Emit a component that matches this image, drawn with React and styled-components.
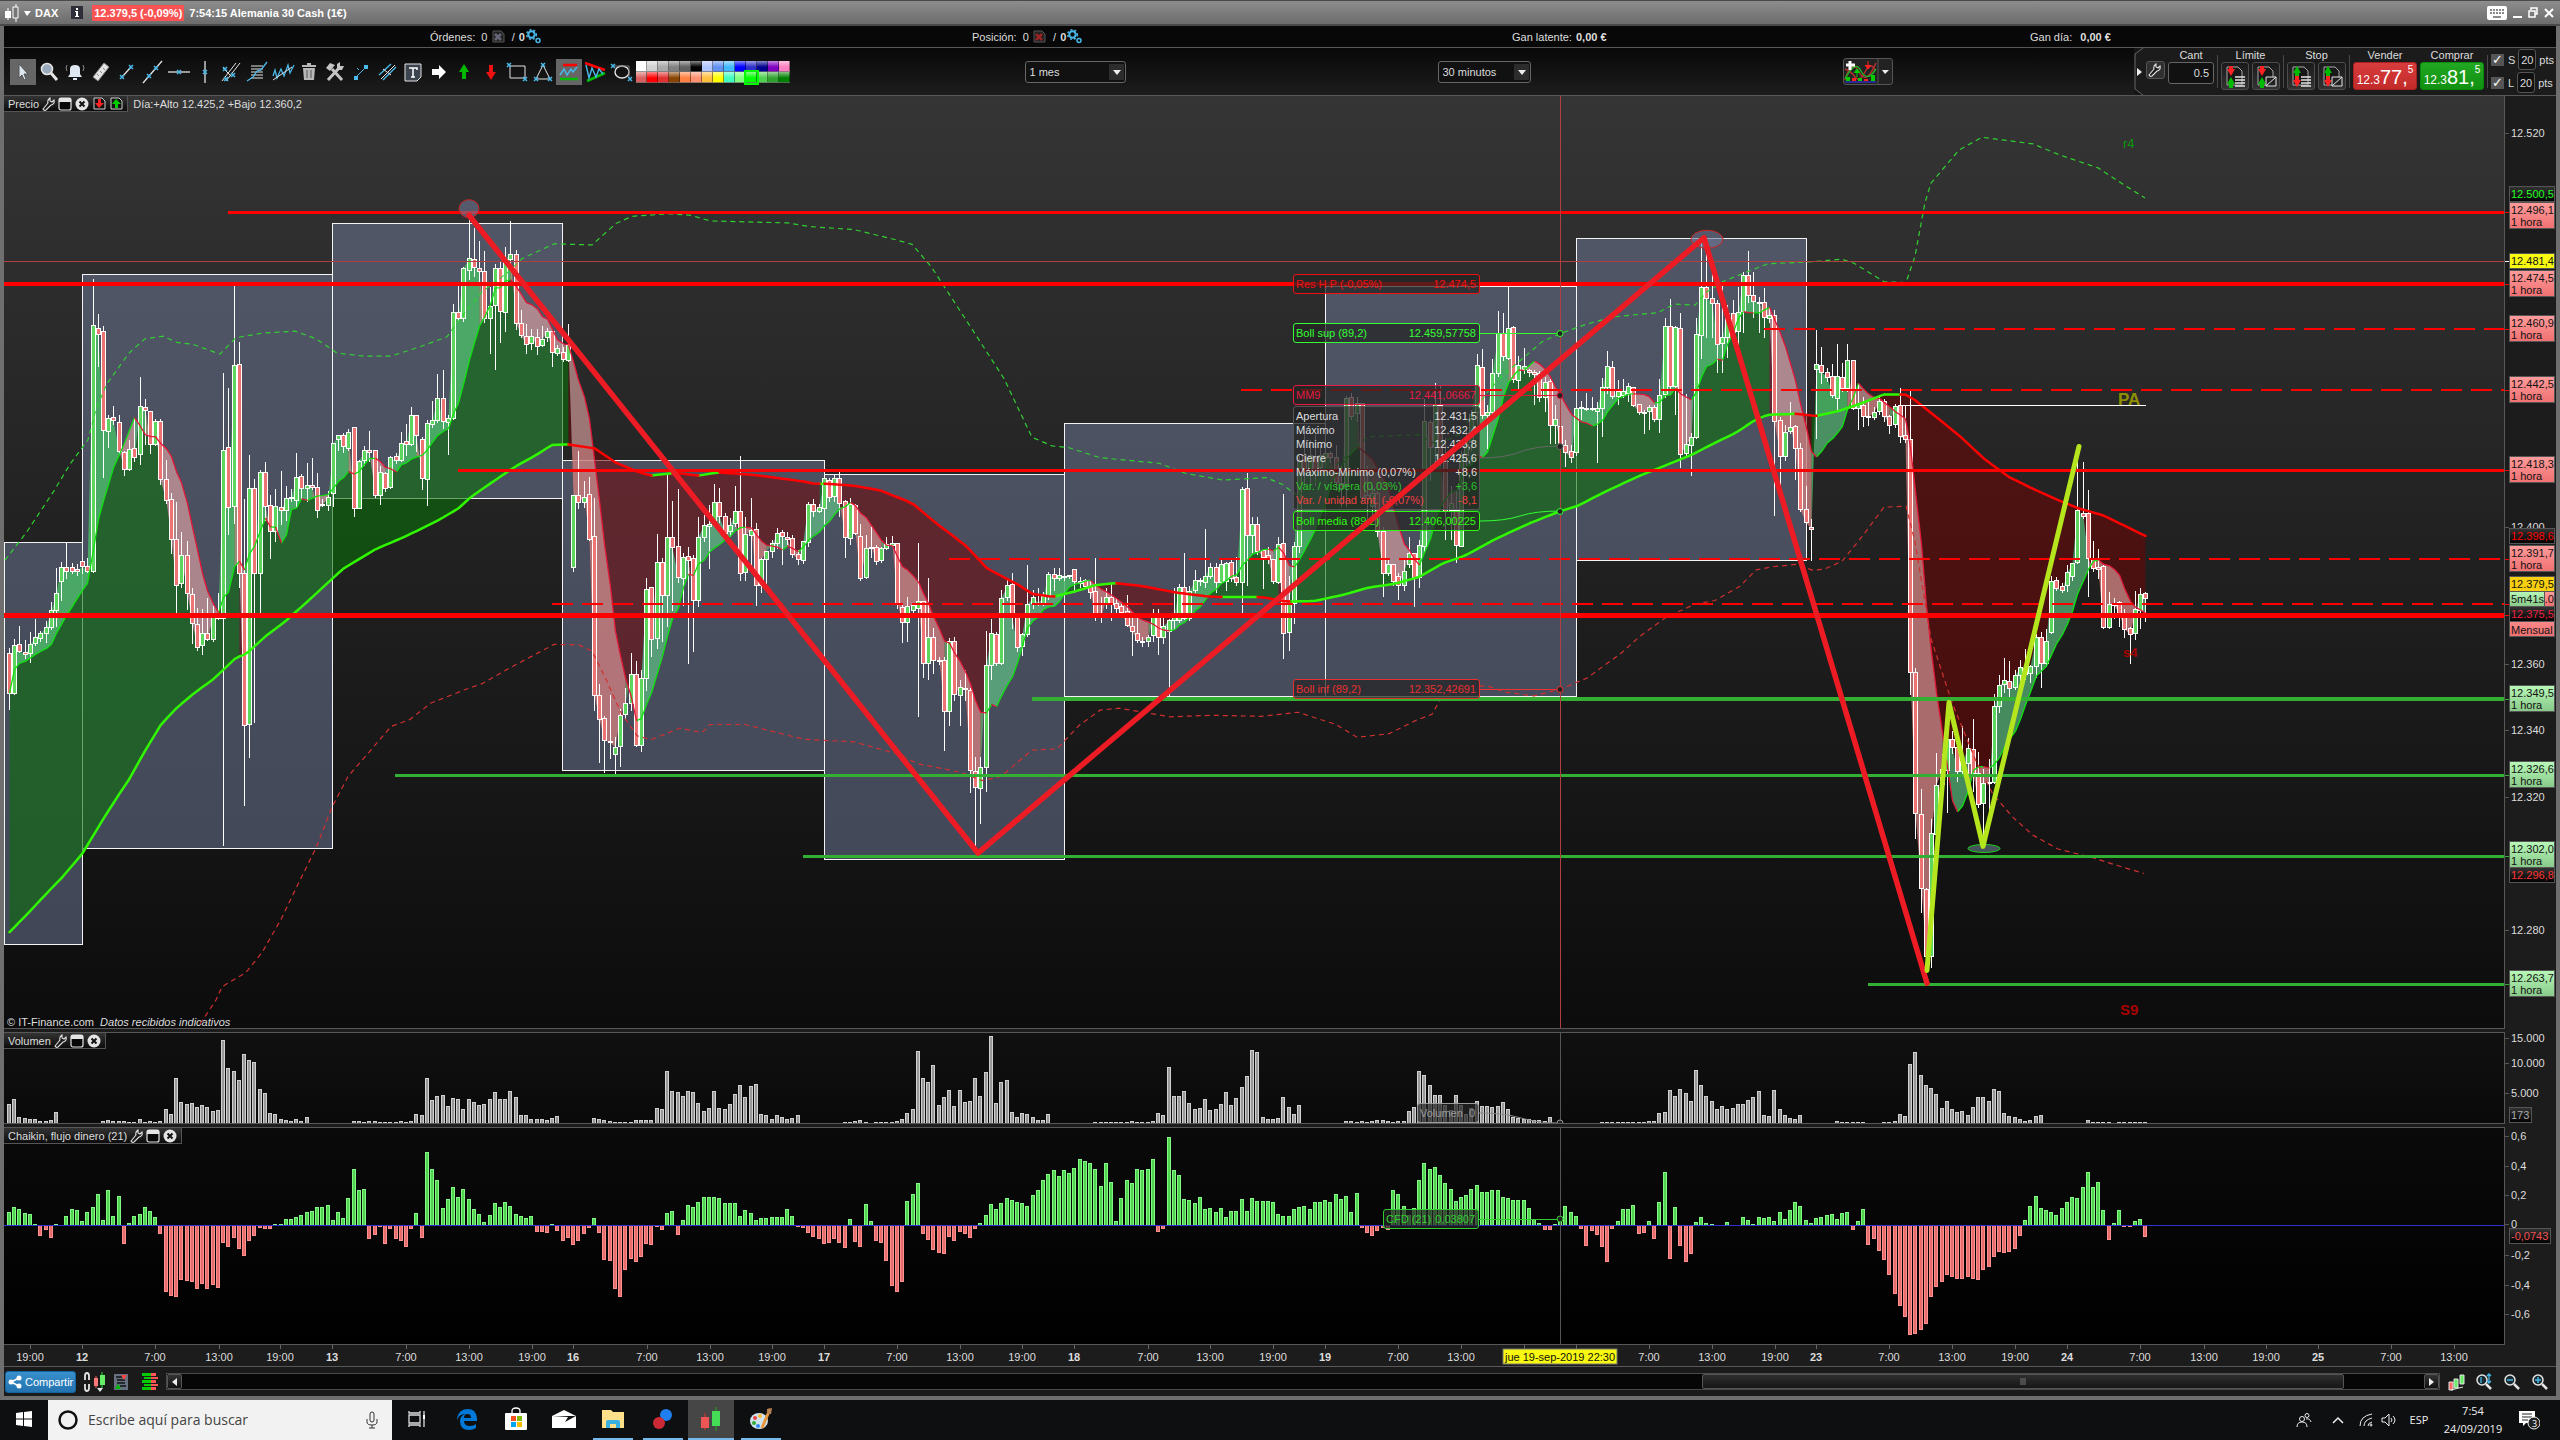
import React, { useState } from 'react';
import styled, { createGlobalStyle, css } from 'styled-components';

const GlobalStyle = createGlobalStyle`
    * {
        box-sizing: border-box;
    }
    body {
        margin: 0;
        background: #101010;
        color: #ddd;
        font: 11px/14px 'Liberation Sans', Arial, sans-serif;
        overflow: hidden;
    }
    button, select, input {
        font: inherit;
        color: inherit;
        margin: 0;
        padding: 0;
    }
    svg {
        display: block;
        flex: none;
    }
`;

/* ---------- data ---------- */

// open, close, high, low of every 30 minute bar, as distance below the reference price
const CANDLES = [
    888,967,878,998, 967,873,860,969, 871,885,833,887, 886,891,862,898, 889,871,845,907, 869,857,821,873,
    859,850,844,866, 850,837,825,867, 837,805,787,842, 804,771,721,835, 748,720,708,785, 720,728,671,742,
    720,728,711,732, 724,728,712,735, 709,718,700,732, 718,729,700,731, 729,245,153,731, 252,264,223,327,
    258,452,245,543, 453,428,420,486, 426,433,402,440, 436,492,420,496, 494,528,490,539, 529,489,470,530,
    487,504,428,512, 499,405,345,519, 407,412,390,480, 415,479,414,497, 479,434,428,482, 434,548,428,558,
    548,589,508,594, 587,665,573,692, 665,756,590,809, 752,697,650,760, 697,772,668,802, 773,830,760,870,
    832,877,798,882, 874,850,800,890, 850,861,780,864, 862,815,795,865, 812,820,770,822, 820,491,338,1266,
    485,603,368,655, 601,324,168,635, 322,732,278,760, 732,1030,585,1186, 1028,565,498,1092, 565,732,545,1025,
    733,534,528,810, 534,600,512,628, 599,650,578,703, 650,601,566,670, 602,608,530,636, 609,585,560,628,
    584,583,565,590, 588,544,494,600, 542,566,537,585, 566,560,514,590, 560,563,505,568, 563,609,535,622,
    596,598,585,600, 598,583,570,608, 575,477,475,600, 470,462,461,490, 462,483,455,495, 488,455,448,490,
    446,605,445,620, 604,512,508,605, 511,491,482,520, 490,494,451,512, 491,579,490,583, 579,534,520,596,
    536,565,533,572, 563,505,501,566, 503,511,495,516, 511,477,453,513, 473,480,439,500, 479,422,404,482,
    422,461,420,492, 469,546,464,568, 547,438,431,598, 440,433,393,445, 432,389,340,437, 389,434,333,448,
    436,428,420,498, 428,221,203,430, 221,233,160,238, 232,134,130,238, 138,115,38,156, 117,132,54,150,
    134,140,80,163, 140,233,99,241, 233,209,170,300, 207,134,125,333, 134,219,121,280, 220,116,92,258,
    117,106,40,136, 107,243,97,253, 242,266,214,270, 268,283,243,301, 281,268,251,293, 269,287,252,302,
    286,273,245,288, 270,258,249,277, 258,299,255,327, 301,291,283,305, 298,312,288,316, 315,285,243,316,
    721,580,579,728, 580,592,490,605, 593,583,550,603, 577,665,542,668, 660,971,583,1000, 971,1018,948,1103,
    1016,1059,1010,1122, 1061,1064,970,1095, 1086,1073,1051,1126, 1072,1010,997,1111, 1008,987,956,1018, 987,930,887,1000,
    930,1070,902,1072, 1070,938,920,1080, 938,763,740,962, 760,861,759,895, 860,711,653,880, 711,775,700,866,
    775,661,534,835, 661,682,588,805, 680,740,566,750, 741,701,690,795, 698,706,680,909, 703,785,695,884,
    785,661,620,797, 661,637,617,670, 640,636,596,722, 629,592,555,640, 592,620,563,632, 620,654,612,660,
    650,637,622,660, 634,611,560,640, 611,732,500,745, 730,656,620,745, 658,647,583,730, 646,756,632,794,
    756,705,700,770, 704,689,687,752, 689,674,665,700, 674,654,642,683, 652,660,645,715, 661,665,650,675,
    663,695,655,700, 694,705,685,715, 706,670,668,712, 671,596,590,680, 596,610,585,620, 610,602,595,613,
    605,545,538,635, 550,583,543,590, 581,545,538,590, 545,594,533,620, 590,662,587,700, 663,597,584,675,
    598,653,595,655, 659,742,635,745, 740,684,655,742, 684,681,640,700, 681,709,675,715, 707,684,680,710,
    684,676,660,685, 677,674,657,680, 674,790,672,800, 798,829,790,868, 829,797,777,866, 804,794,790,810,
    800,787,672,1012, 787,908,785,935, 908,857,740,940, 857,902,837,928, 902,903,895,910, 902,1002,895,1078,
    1002,865,858,1030, 865,970,855,980, 972,955,940,1030, 957,960,920,980, 961,1119,955,1162, 1120,1152,1090,1275,
    1153,1112,1090,1222, 1113,913,843,1160, 912,850,820,940, 851,908,845,912, 908,782,763,910, 780,755,740,785,
    754,819,730,840, 819,877,813,885, 876,852,848,893, 852,793,715,855, 790,780,763,800, 792,790,760,795,
    790,778,768,795, 778,734,728,783, 734,742,720,765, 741,736,720,745, 740,737,735,745, 738,736,735,742,
    724,748,722,770, 748,751,738,760, 745,757,742,762, 758,770,745,782, 768,815,700,825, 810,818,778,828,
    793,780,760,800, 780,792,752,825, 790,800,780,810, 797,808,790,812, 806,834,773,836, 835,846,815,892,
    849,864,815,868, 867,865,855,875, 865,858,852,875, 854,818,800,866, 818,857,800,890, 857,835,810,870,
    845,825,820,972, 825,815,760,840, 825,760,752,828, 760,820,690,822, 820,768,755,825, 766,745,725,770,
    745,748,740,755, 749,737,644,760, 738,720,710,742, 720,750,710,770, 749,714,705,752, 748,712,708,765,
    711,742,700,748, 740,749,698,755, 749,567,562,810, 565,658,534,755, 658,636,620,690, 636,688,620,695,
    687,700,685,762, 697,705,680,712, 705,747,702,752, 749,675,660,752, 673,849,575,898, 847,792,735,882,
    790,679,670,830, 680,510,500,690, 500,530,440,560, 530,500,470,560, 505,530,460,560, 525,500,480,540,
    505,496,485,515, 497,505,490,515, 505,553,480,570, 555,565,520,600, 560,390,383,600, 388,425,378,430,
    418,398,385,435, 398,583,397,590, 580,585,520,630, 600,575,560,620, 575,650,570,660, 650,733,640,778,
    733,715,705,735, 714,748,713,755, 738,755,730,783, 755,728,700,765, 715,692,660,720, 693,740,690,797,
    740,678,665,760, 680,435,390,690, 436,485,430,550, 485,400,357,530, 402,510,362,520, 510,610,465,665,
    608,595,560,665, 608,677,570,710, 679,500,490,680, 500,480,450,520, 475,420,410,490, 417,325,300,440,
    328,422,292,428, 423,417,400,488, 417,341,310,430, 340,262,216,345, 262,307,220,315, 311,251,170,313,
    250,352,245,357, 353,325,305,370, 332,327,290,340, 334,338,330,345, 338,342,333,400, 340,388,335,395,
    387,358,345,415, 356,442,350,478, 442,430,400,478, 444,480,425,505, 482,495,470,523, 492,505,480,515,
    495,409,405,500, 409,407,392,430, 409,408,378,412, 408,410,385,412, 415,409,395,515, 409,368,348,464,
    367,326,294,380, 328,386,315,390, 385,376,352,400, 383,376,350,388, 379,366,357,395, 367,402,365,405,
    401,417,398,420, 417,416,410,458, 415,407,400,450, 406,430,400,435, 431,384,350,456, 382,248,230,388,
    248,366,194,370, 366,250,245,420, 252,499,220,525, 497,480,380,500, 482,465,455,540, 465,264,230,468,
    265,172,72,310, 172,193,80,270, 193,202,140,270, 202,283,195,338, 281,270,165,338, 269,222,205,308,
    222,260,195,275, 258,220,170,300, 218,148,140,260, 148,187,98,200, 187,199,140,230, 200,201,190,260,
    201,230,172,270, 232,226,210,240, 227,434,215,618, 432,503,425,587, 502,455,440,510, 454,446,395,458,
    444,488,440,548, 487,607,475,610, 606,633,560,700, 642,646,625,706, 333,322,253,467, 324,338,287,360,
    338,347,328,355, 345,384,320,388, 389,346,282,410, 348,370,318,375, 370,315,282,375, 315,408,312,410,
    409,400,360,450, 402,424,385,444, 424,426,395,442, 427,416,405,430, 415,394,385,420, 394,424,390,435,
    425,441,420,458, 440,404,398,445, 403,464,367,476, 462,469,400,475, 469,926,373,970, 926,1202,916,1251,
    1204,1349,1153,1396, 1351,1483,1348,1510, 1482,1242,1212,1505, 1243,1147,1082,1260, 1145,1117,1085,1170, 1118,1058,1030,1200,
    1057,1073,1040,1085, 1074,1121,1070,1140, 1120,1100,1030,1130, 1104,1075,1054,1130, 1077,1125,1016,1160, 1125,1184,1080,1190,
    1183,1143,1115,1270, 1143,1142,1095,1200, 1141,993,968,1143, 993,952,930,1005, 950,942,896,965, 943,957,902,975,
    955,931,920,960, 932,917,900,950, 918,930,880,940, 928,914,910,945, 915,857,850,935, 857,908,845,956,
    909,865,840,915, 848,748,735,850, 746,761,738,765, 758,765,750,770, 755,730,715,768, 738,713,710,745,
    711,608,480,713, 614,620,513,625, 614,703,567,778, 702,723,668,728, 720,724,683,742, 718,838,715,840,
    838,793,768,840, 790,795,780,820, 788,812,785,835, 814,841,800,858, 839,852,835,909, 850,803,765,862,
    804,774,760,840, 772,782,768,826,
];

const VOLUME = [
    57,72,18,15,12,12,6,6,9,33,0,0,0,0,0,0,0,0,6,9,6,6,6,4,4,12,4,6,4,6,42,28,135,63,57,60,48,54,48,36,
    39,249,165,156,129,207,189,183,102,90,30,27,12,9,6,12,6,18,0,0,0,0,0,0,0,0,6,6,4,6,6,4,4,4,4,6,4,6,27,24,
    135,69,81,84,51,75,72,42,72,63,54,57,72,93,72,72,96,78,24,24,12,12,12,9,15,21,0,0,0,0,0,0,15,12,9,6,4,4,4,4,
    9,9,9,9,45,42,156,96,93,81,96,93,60,36,45,96,45,42,57,87,114,78,111,117,27,24,12,24,18,12,15,24,0,0,0,0,0,0,0,0,
    4,4,6,9,4,0,4,4,4,4,6,12,30,42,216,135,123,174,54,78,99,51,99,63,66,135,81,153,261,60,123,129,33,18,30,27,18,9,9,27,
    0,0,0,0,0,0,0,0,4,4,4,4,4,4,4,6,4,4,4,6,30,24,168,81,81,96,60,42,45,72,39,42,57,93,54,75,108,141,219,213,
    18,12,12,15,78,48,27,54,0,0,0,0,0,0,0,0,6,6,4,6,4,6,9,9,6,4,6,6,36,48,156,144,114,84,84,54,40,84,54,28,
    45,66,50,52,48,51,63,42,18,14,12,12,9,9,6,18,0,0,0,0,0,0,0,0,0,4,4,4,4,4,4,4,4,4,6,6,30,33,99,81,
    102,90,66,159,114,81,66,42,51,42,45,57,57,69,78,96,24,21,99,42,24,15,12,24,0,0,0,0,0,0,6,4,4,4,4,4,0,0,0,4,
    4,6,27,21,177,213,144,114,105,87,45,66,42,33,36,24,48,78,78,66,102,96,30,21,18,12,6,9,21,24,0,0,0,0,0,0,0,0,9,4,
    4,4,4,0,4,4,4,4,4,4,
];

const CHAIKIN = [
    40,55,49,37,34,4,-31,-13,-37,4,0,28,49,46,13,40,55,94,16,106,28,88,-55,7,28,34,55,43,25,-25,-199,-211,-214,-163,-166,-169,-190,-175,-190,-178,
    -187,-52,-64,-37,-70,-91,-46,-31,-7,-10,-10,2,4,19,19,25,31,40,43,55,55,61,16,40,22,82,169,106,109,-40,-28,-4,-55,-10,-40,-46,-64,-10,37,-37,
    220,169,136,52,79,115,85,109,79,49,34,10,31,67,55,70,58,34,28,22,28,-19,-19,-22,4,-16,-46,-37,-58,-46,-25,-7,22,-22,-103,-106,-190,-214,-133,-100,
    -109,-94,-55,-58,-4,-13,37,43,-28,16,61,55,70,85,85,85,82,67,67,67,28,46,37,16,22,22,25,25,25,49,28,-4,-7,-22,-34,-40,-55,-52,-40,-52,
    -67,19,-49,-64,64,13,-46,-52,-106,-181,-199,-169,73,94,127,-25,-43,-73,-82,-85,-34,-46,-19,-25,-37,-10,7,31,64,49,67,82,76,70,67,58,91,106,136,154,
    166,148,166,157,172,199,193,187,169,118,187,130,13,82,136,127,169,166,169,199,-19,-10,265,166,151,79,76,67,85,49,52,40,52,25,43,43,79,43,82,73,
    73,73,70,34,28,28,49,55,58,49,70,70,76,70,94,79,88,40,97,-7,-22,-31,-16,-7,-13,106,94,58,30,50,136,187,169,175,151,127,109,73,85,91,
    109,121,100,100,106,106,85,82,76,76,76,52,18,6,-13,-13,4,28,58,40,28,-10,-61,-16,-28,-64,-109,-10,13,49,49,61,-25,-22,13,-40,70,160,-100,55,
    -61,-109,-85,10,25,7,4,0,0,10,0,0,25,16,4,25,22,25,13,40,19,46,70,58,16,7,22,25,31,34,19,37,40,-13,13,49,-58,-40,-76,-103,
    -148,-205,-241,-274,-328,-325,-313,-295,-214,-184,-169,-148,-154,-160,-160,-154,-160,-163,-133,-124,-94,-79,-82,-79,-70,-31,16,58,88,52,46,40,31,52,70,85,82,115,160,115,
    130,46,-43,7,46,-4,-4,13,19,-34,
];

// Bollinger bands as x, value pairs
const BOLL_MEDIA = [
    5,1444, 27,1400, 51,1350, 62,1328, 82,1282, 103,1214, 119,1165, 129,1136, 144,1083, 161,1028, 177,995, 192,970,
    214,938, 236,897, 246,890, 265,856, 284,828, 308,786, 343,723, 375,685, 407,658, 439,627, 458,605, 471,582,
    493,552, 514,524, 536,500, 552,480, 568,479, 595,487, 616,515, 638,533, 651,540, 675,535, 699,540, 718,534,
    750,538, 782,546, 804,552, 814,556, 825,556, 854,560, 880,569, 912,594, 934,630, 966,678, 987,722, 1020,756,
    1032,772, 1053,778, 1079,765, 1095,755, 1116,751, 1143,757, 1175,769, 1207,777, 1218,778, 1261,778, 1287,787,
    1314,786, 1341,775, 1368,760, 1395,752, 1419,739, 1443,712, 1464,698, 1496,664, 1529,634, 1560,610, 1577,600,
    1607,570, 1638,542, 1662,523, 1691,500, 1715,476, 1736,456, 1756,430, 1768,421, 1795,419, 1816,423, 1838,414,
    1862,398, 1884,381, 1905,381, 1915,392, 1931,417, 1960,463, 1984,507, 2009,543, 2033,566, 2058,588, 2078,604,
    2103,618, 2123,637, 2146,659,
];

const BOLL_SUP = [
    5,706, 27,650, 54,570, 70,518, 88,470, 96,410, 107,360, 129,300, 145,272, 163,267, 177,279, 193,283, 220,302,
    236,270, 262,261, 295,257, 316,272, 337,300, 364,306, 391,306, 418,289, 447,268, 466,218, 482,180, 509,140,
    522,115, 554,86, 592,88, 616,46, 632,32, 670,27, 691,30, 710,41, 788,45, 809,52, 854,58, 896,78, 912,87,
    931,130, 971,250, 1004,350, 1032,465, 1052,482, 1068,485, 1100,505, 1159,516, 1186,536, 1223,549, 1266,544,
    1282,557, 1298,580, 1336,520, 1368,464, 1419,460, 1437,480, 1459,460, 1486,380, 1502,345, 1523,310, 1542,278,
    1560,262, 1587,243, 1614,229, 1640,224, 1658,221, 1674,204, 1695,206, 1707,180, 1723,160, 1744,143, 1768,125,
    1813,121, 1842,116, 1854,124, 1884,160, 1906,162, 1915,110, 1925,5, 1931,-33, 1959,-98, 1982,-123, 2033,-110,
    2060,-88, 2098,-63, 2123,-31, 2145,-4,
];

const BOLL_INF = [
    200,1615, 216,1568, 222,1542, 246,1514, 262,1475, 281,1410, 297,1345, 316,1270, 332,1190, 348,1130, 370,1080,
    391,1032, 410,1018, 431,986, 466,959, 482,948, 509,918, 554,871, 579,872, 592,884, 605,935, 621,1005, 637,1050,
    651,1058, 680,1035, 702,1044, 710,1028, 745,1028, 804,1057, 854,1062, 896,1085, 918,1105, 961,1122, 982,1138,
    1001,1130, 1032,1078, 1057,1076, 1079,1030, 1100,1000, 1119,996, 1170,1013, 1212,1010, 1261,1012, 1298,1004,
    1336,1028, 1357,1053, 1389,1046, 1416,1020, 1432,1008, 1440,980, 1459,955, 1486,952, 1507,965, 1534,972,
    1560,959, 1587,937, 1620,890, 1640,855, 1666,818, 1695,792, 1715,785, 1740,757, 1756,725, 1772,719, 1797,714,
    1813,726, 1825,723, 1842,708, 1862,660, 1884,602, 1906,600, 1915,670, 1931,860, 1952,985, 1976,1100, 1993,1165,
    2013,1210, 2033,1245, 2058,1272, 2091,1288, 2115,1303, 2144,1320,
];

const SESSIONS = [
    [4, 82, 671, 1459],
    [82, 332, 146, 1271],
    [332, 562, 46, 585],
    [562, 824, 511, 1118],
    [824, 1064, 538, 1293],
    [1064, 1325, 438, 973],
    [1325, 1576, 170, 973],
    [1576, 1806, 75, 706],
];

const LEVELS = [
    { v: 24, from: 228, w: 3, c: '#f00' },
    { v: 165, from: 4, w: 4, c: '#f00' },
    { v: 530, from: 458, w: 3, c: '#f00' },
    { v: 814, from: 4, w: 5, c: '#f00' },
    { v: 793, from: 552, w: 2, c: '#f00', dash: true },
    { v: 704, from: 949, w: 2, c: '#f00', dash: true },
    { v: 373, from: 1241, w: 2, c: '#f00', dash: true },
    { v: 253, from: 1764, w: 2, c: '#f00', dash: true },
    { v: 979, from: 1032, w: 4, c: '#33b033' },
    { v: 1128, from: 395, w: 3, c: '#33b033' },
    { v: 1287, from: 803, w: 3, c: '#33b033' },
    { v: 1538, from: 1868, w: 3, c: '#33b033' },
];

const TIMES = [
    [30, '19:00'], [82, '12'], [155, '7:00'], [219, '13:00'], [280, '19:00'], [332, '13'], [406, '7:00'],
    [469, '13:00'], [532, '19:00'], [573, '16'], [647, '7:00'], [710, '13:00'], [772, '19:00'], [824, '17'],
    [897, '7:00'], [960, '13:00'], [1022, '19:00'], [1074, '18'], [1148, '7:00'], [1210, '13:00'], [1273, '19:00'],
    [1325, '19'], [1398, '7:00'], [1461, '13:00'], [1524, ''], [1576, ''], [1649, '7:00'], [1712, '13:00'],
    [1775, '19:00'], [1816, '23'], [1889, '7:00'], [1952, '13:00'], [2015, '19:00'], [2067, '24'], [2140, '7:00'],
    [2204, '13:00'], [2266, '19:00'], [2318, '25'], [2391, '7:00'], [2454, '13:00'],
];

// later tags are drawn over earlier ones
const PRICE_TAGS = [
    { y: 106, text: '12.496,1', sub: '1 hora', kind: 'red' },
    { y: 90, text: '12.500,5', kind: 'dark', c: '#2f2' },
    { y: 157, text: '12.481,4', kind: 'yellow' },
    { y: 174, text: '12.474,5', sub: '1 hora', kind: 'red' },
    { y: 219, text: '12.460,9', sub: '1 hora', kind: 'red' },
    { y: 280, text: '12.442,5', sub: '1 hora', kind: 'red' },
    { y: 360, text: '12.418,3', sub: '1 hora', kind: 'red' },
    { y: 432, text: '12.398,6', kind: 'dark', c: '#f00' },
    { y: 449, text: '12.391,7', sub: '1 hora', kind: 'red' },
    { y: 514, text: '', sub: 'Mensual', kind: 'red' },
    { y: 495, text: '.0', kind: 'red', end: true },
    { y: 480, text: '12.379,5', kind: 'gold' },
    { y: 510, text: '12.375,5', kind: 'dark', c: '#f02040' },
    { y: 495, text: '5m41s', kind: 'green', w: 35 },
    { y: 589, text: '12.349,5', sub: '1 hora', kind: 'green' },
    { y: 665, text: '12.326,6', sub: '1 hora', kind: 'green' },
    { y: 745, text: '12.302,0', sub: '1 hora', kind: 'green' },
    { y: 771, text: '12.296,8', kind: 'dark', c: '#f33' },
    { y: 874, text: '12.263,7', sub: '1 hora', kind: 'green' },
];

const PRICE_MARKS = [[37, '12.520'], [431, '12.400'], [568, '12.360'], [634, '12.340'], [701, '12.320'], [834, '12.280']];

/* ---------- chart maths ---------- */

const bars = [];
for (let i = 0; i < CANDLES.length; i += 4) {
    const [o, c, h, l] = CANDLES.slice(i, i + 4);
    bars.push({ o, c, h, l });
}

const X = (i) => Math.round(9 + 5.223 * i) + 0.5;
const Y = (v) => 104 + v / 1.96;
const YR = (v) => Math.floor(Y(v)) + 0.5;

const mm9 = bars.map((_, i) => {
    const part = bars.slice(Math.max(0, i - 8), i + 1);
    return part.reduce((sum, b) => sum + b.c, 0) / part.length;
});

const valueAt = (series, x) => {
    for (let i = 2; i < series.length; i += 2) {
        if (x <= series[i]) {
            const t = (x - series[i - 2]) / (series[i] - series[i - 2]);
            return series[i - 1] + t * (series[i + 1] - series[i - 1]);
        }
    }
    return series[series.length - 1];
};

const mm89 = bars.map((_, i) => valueAt(BOLL_MEDIA, X(i)));

const band = (line, above) => {
    let d = '';
    for (let i = 1; i < bars.length; i++) {
        if (bars[i].c < line[i] === above) {
            d += `M${X(i - 1)} ${Y(bars[i - 1].c)}L${X(i)} ${Y(bars[i].c)}L${X(i)} ${Y(line[i])}L${X(i - 1)} ${Y(line[i - 1])}Z`;
        }
    }
    return d;
};

const slope = (line, rising) => {
    let d = '';
    for (let i = 1; i < line.length; i++) {
        if (line[i] <= line[i - 1] === rising) {
            d += `M${X(i - 1)} ${Y(line[i - 1])}L${X(i)} ${Y(line[i])}`;
        }
    }
    return d;
};

const bodies = (up) =>
    bars
        .map((b, i) => {
            if (b.c <= b.o !== up) return '';
            const top = YR(Math.min(b.o, b.c));
            const height = Math.max(1, YR(Math.max(b.o, b.c)) - top);
            return `M${X(i) - 2} ${top}h4v${height}h-4Z`;
        })
        .join('');

const wicks = bars.map((b, i) => `M${X(i)} ${YR(b.h)}V${YR(b.l)}`).join('');

const points = (series) => {
    const out = [];
    for (let i = 0; i < series.length; i += 2) out.push(`${series[i]},${Y(series[i + 1])}`);
    return out.join(' ');
};

/* ---------- window ---------- */

const Screen = styled.div`
    display: flex;
    flex-direction: column;
    height: 100vh;
`;

const Window = styled.main`
    flex: 1;
    min-height: 0;
    display: flex;
    flex-direction: column;
    border: solid #6f6f6f;
    border-width: 0 4px 4px;
    background: #1c1c1c;
`;

const TitleBar = styled.header`
    height: 26px;
    margin: 0 -4px;
    padding: 0 6px 0 4px;
    display: flex;
    align-items: center;
    border: solid #4a4a4a;
    border-width: 1px 0 2px;
    background: linear-gradient(#8d8d8d, #6c6c6c);
    color: #fff;
    font-weight: bold;
`;

const Quote = styled.span`
    margin: 0 5px 0 9px;
    padding: 1px 2px;
    background: #f85252;
`;

const Market = styled.h1`
    margin: 0 13px 0 4px;
    font-size: 11px;
`;

const WindowButtons = styled.div`
    margin-left: auto;
    display: flex;
    gap: 6px;
    align-items: center;
`;

const PlainButton = styled.button`
    border: 0;
    background: none;
    display: flex;
    align-items: center;
    justify-content: center;
`;

const StatusRow = styled.div`
    height: 22px;
    padding-left: 426px;
    display: grid;
    grid-template-columns: 542fr 540fr 518fr 526fr;
    align-items: center;
    background: #080808;
    border-bottom: 1px solid #585858;
`;

const Status = styled.div`
    display: flex;
    align-items: center;
    gap: ${({ $gap }) => $gap || 1}px;
    white-space: pre;
`;

const Toolbar = styled.div`
    height: 48px;
    display: grid;
    grid-template-columns: 786px 570fr 248fr 526fr 422px;
    align-items: center;
    background: linear-gradient(#080808, #1d1d1d);
    border-bottom: 1px solid #585858;
`;

const Tools = styled.div`
    display: flex;
    padding-left: 6px;
    align-items: center;
`;

const Tool = styled.button`
    width: 26px;
    height: 26px;
    border: 0;
    background: ${({ $on }) => ($on ? '#666' : 'none')};
`;

const Palette = styled.div`
    margin-left: 2px;
    display: grid;
    grid-template-columns: repeat(14, 11px);
    grid-auto-rows: 11px;
`;

const Swatch = styled.button`
    border: 0;
    border-right: 1px solid #0006;
    border-bottom: 1px solid #0006;
    background: linear-gradient(#fff8, #fff0 60%), ${({ $color }) => $color};
    ${({ $on }) =>
        $on &&
        css`
            outline: 2px solid #0f0;
            z-index: 1;
        `}
`;

const Center = styled.div`
    display: flex;
    justify-content: center;
    padding-right: ${({ $right }) => $right || 0}px;
`;

const SelectBox = styled.label`
    position: relative;
    width: ${({ $width }) => $width}px;

    select {
        appearance: none;
        width: 100%;
        height: 22px;
        padding-left: 4px;
        border: 1px solid #666;
        border-radius: 3px;
        background: #111;
    }

    svg {
        position: absolute;
        right: 2px;
        top: 3px;
        pointer-events: none;
    }
`;

const IndicatorButton = styled.button`
    display: flex;
    width: 50px;
    height: 27px;
    border: 1px solid #555;
    border-radius: 3px;
    background: #222;
`;

const OrderPanel = styled.div`
    height: 47px;
    display: flex;
    gap: 3px;
    align-items: flex-start;
    background: #1b1b1b;
`;

const OrderGroup = styled.div`
    display: flex;
    flex-direction: column;
    align-items: center;
    text-align: center;
`;

const OrderRow = styled.div`
    display: flex;
    gap: 3px;
`;

const Divider = styled.i`
    width: 1px;
    height: 33px;
    margin-top: 7px;
    background: #484848;
`;

const QtyInput = styled.input`
    width: 46px;
    height: 22px;
    padding-right: 4px;
    text-align: right;
    border: 1px solid #666;
    border-radius: 3px;
    background: #111;
`;

const OrderButton = styled.button`
    width: 28px;
    height: 28px;
    border: 1px solid #4c4c4c;
    border-radius: 3px;
    background: linear-gradient(#1a1a1a, #333);
`;

const WrenchButton = styled.button`
    width: 19px;
    height: 18px;
    margin-top: 13px;
    border: 1px solid #555;
    border-radius: 3px;
    background: #303030;
`;

const PriceButton = styled.button`
    width: 64px;
    height: 28px;
    display: flex;
    align-items: flex-end;
    justify-content: center;
    border: 1px solid ${({ $buy }) => ($buy ? '#0a8a0a' : '#a82020')};
    border-radius: 3px;
    background: ${({ $buy }) => ($buy ? 'linear-gradient(#22a822, #109010)' : 'linear-gradient(#d83c3c, #c22a2a)')};
    color: #fff;
    font-size: 12px;
    line-height: 18px;

    b {
        font-size: 20px;
        font-weight: normal;
        line-height: 24px;
    }

    sup {
        font-size: 10px;
        line-height: 14px;
        align-self: flex-start;
    }
`;

const Checks = styled.div`
    display: flex;
    flex-direction: column;
`;

const Check = styled.div`
    height: 23px;
    display: flex;
    align-items: center;
    gap: 3px;

    label {
        display: flex;
        align-items: center;
        gap: 4px;
    }

    input[type='checkbox'] {
        appearance: none;
        width: 13px;
        height: 12px;
        background: #555;
        display: grid;
        place-items: center;
    }

    input[type='checkbox']:checked::after {
        content: '✓';
        color: #fff;
        font: bold 13px/12px 'DejaVu Sans', sans-serif;
    }

    input[type='text'] {
        width: 18px;
        height: 21px;
        text-align: center;
        border: 1px solid #555;
        border-radius: 3px;
        background: #111;
    }
`;

/* ---------- chart panels ---------- */

const Charts = styled.section`
    flex: 1;
    min-height: 0;
    display: grid;
    grid-template-columns: minmax(0, 1fr) 51px;
    grid-template-rows: minmax(0, 1fr) 92px 218px;
    row-gap: 3px;
`;

const Panel = styled.div`
    position: relative;
    overflow: hidden;
    border: solid #585858;
    border-width: ${({ $first }) => ($first ? '0 1px 1px 0' : '1px 1px 1px 0')};
    background: linear-gradient(${({ $from }) => $from}, ${({ $to }) => $to});
`;

const Plot = styled.svg`
    position: absolute;
    inset: 0;
    width: 100%;
    height: 100%;
    pointer-events: none;
`;

const Axis = styled.svg`
    width: 51px;
    height: 100%;
`;

const PanelHead = styled.div`
    position: absolute;
    left: 0;
    top: 0;
    display: flex;
    align-items: center;
    gap: 5px;
`;

const PanelTitle = styled.div`
    height: 16px;
    padding: 0 3px 0 4px;
    display: flex;
    align-items: center;
    gap: 2px;
    border: solid #555;
    border-width: 0 1px 1px 0;
    background: linear-gradient(#333, #0c0c0c);
`;

const Credits = styled.div`
    position: absolute;
    left: 3px;
    bottom: 0;
    line-height: 12px;
`;

const Tag = styled.div`
    position: absolute;
    left: ${({ $x }) => $x}px;
    top: ${({ $y }) => $y}px;
    width: ${({ $width }) => $width}px;
    height: 20px;
    padding: 0 3px 0 2px;
    display: flex;
    justify-content: space-between;
    line-height: 18px;
    border: 1px solid;
    border-radius: 3px;
    background: rgba(36, 36, 36, 0.72);
    color: ${({ $color }) => $color};
`;

const InfoBox = styled.dl`
    position: absolute;
    left: 1289px;
    top: 310px;
    width: 187px;
    margin: 0;
    padding: 2px;
    border: 1px solid #555;
    border-radius: 3px;
    background: rgba(36, 36, 36, 0.76);

    div {
        display: flex;
        justify-content: space-between;
    }

    div:nth-child(6) {
        color: #2bc02b;
    }

    div:nth-child(7) {
        color: #f04040;
    }

    dd {
        margin: 0;
    }
`;

const TimeAxis = styled.svg`
    width: 100%;
    height: 21px;
    background: #1c1c1c;
`;

const BottomBar = styled.div`
    height: 30px;
    padding: 0 6px 0 1px;
    display: flex;
    align-items: center;
    gap: 8px;
    border-top: 1px solid #585858;
    background: #1a1a1a;
`;

const ShareButton = styled.button`
    width: 71px;
    height: 22px;
    display: flex;
    align-items: center;
    gap: 3px;
    padding-left: 2px;
    border: 1px solid #1565a0;
    border-radius: 3px;
    background: linear-gradient(#3990cc, #2272ae);
    color: #fff;
`;

const Scroller = styled.div`
    flex: 1;
    height: 17px;
    display: flex;
    border: 1px solid #4a4a4a;
    background: #060606;
`;

const ScrollArrow = styled.button`
    width: 15px;
    display: grid;
    place-items: center;
    border: 1px solid #555;
    border-radius: 2px;
    background: linear-gradient(#333, #111);
`;

const ScrollTrack = styled.div`
    flex: 1;
    display: grid;
    grid-template-columns: 1528fr 646fr 80fr;
`;

const Thumb = styled.div`
    grid-column: 2;
    display: grid;
    place-items: center;
    border: 1px solid #555;
    border-radius: 2px;
    background: linear-gradient(#2e2e2e, #161616);
`;

/* ---------- task bar ---------- */

const TaskBar = styled.footer`
    height: 40px;
    display: flex;
    align-items: stretch;
    background: #0e0f11;
    color: #eee;
`;

const TaskButton = styled.button`
    width: ${({ $width }) => $width || 49}px;
    border: 0;
    border-bottom: ${({ $running }) => ($running ? '2px solid #76b9ed' : '2px solid transparent')};
    background: ${({ $active }) => ($active ? '#464646' : 'none')};
    display: flex;
    align-items: center;
    justify-content: center;
    margin: 0 ${({ $m }) => $m || 0}px;
`;

const Search = styled.label`
    width: 344px;
    display: flex;
    align-items: center;
    gap: 10px;
    padding: 0 14px 0 10px;
    background: #f2f2f2;

    input {
        flex: 1;
        min-width: 0;
        border: 0;
        background: none;
        font: 14px/20px 'Open Sans', 'Noto Sans', sans-serif;
        color: #333;
    }

    input::placeholder {
        color: #444;
        opacity: 1;
    }
`;

const Tray = styled.div`
    margin-left: auto;
    padding-right: 10px;
    display: flex;
    align-items: center;
    font: 11px/18px 'Open Sans', 'Noto Sans', sans-serif;
    text-align: center;
`;

const TrayItem = styled.span`
    width: ${({ $width }) => $width}px;
    display: flex;
    justify-content: center;
`;

/* ---------- icons ---------- */

const W = '#e4e4e4';
const B = '#4ab8e8';

const Cross = ({ x, y }) => (
    <path d={`M${x - 2} ${y - 2}l4 4m0-4l-4 4`} stroke={B} strokeWidth="1.5" fill="none" />
);

const TOOLS = {
    cursor: <path d="M9 5v14l3-3 2 5 2-1-2-5h4z" fill="#dde6ee" stroke="#555" />,
    lupa: (
        <>
            <circle cx="11" cy="10" r="5.5" fill="#9ab" stroke={W} strokeWidth="1.6" />
            <path d="M15 14l6 7" stroke={W} strokeWidth="3" />
        </>
    ),
    alerta: (
        <>
            <path d="M6 18l2-3V10q0-4 5-4t5 4v5l2 3zM11 19h4v2h-4z" fill="#dfe8f0" />
            <path d="M5 6q-2 3 0 6M21 6q2 3 0 6" stroke="#888" fill="none" />
        </>
    ),
    regla: <path d="M5 18L16 4l5 4L10 22zM9 15l2 2m1-5l2 2m1-5l2 2" fill={W} stroke="#888" />,
    segmento: (
        <>
            <path d="M8 18l9-10" stroke={W} strokeWidth="1.3" />
            <Cross x={8} y={18} />
            <Cross x={17} y={8} />
        </>
    ),
    recta: (
        <>
            <path d="M3 24L22 2" stroke={W} strokeWidth="1.3" />
            <Cross x={9} y={17} />
            <Cross x={16} y={9} />
        </>
    ),
    horizontal: (
        <>
            <path d="M2 13h22" stroke={W} strokeWidth="1.3" />
            <Cross x={13} y={13} />
        </>
    ),
    vertical: (
        <>
            <path d="M13 2v22" stroke={W} strokeWidth="1.3" />
            <Cross x={13} y={13} />
        </>
    ),
    canal: (
        <>
            <path d="M4 22L18 4M8 22L22 4M5 9l8 8" stroke={W} fill="none" />
            <Cross x={7} y={10} />
            <Cross x={8} y={20} />
            <Cross x={15} y={16} />
        </>
    ),
    fibonacci: (
        <>
            <path d="M7 7h12M7 10h12M7 13h12M7 16h12M7 19h12" stroke={W} />
            <path d="M3 22l6-4 4-6 4-1 6-8" stroke={B} fill="none" strokeWidth="1.3" />
        </>
    ),
    regresion: (
        <>
            <path d="M3 17l2-6 2 8 4-9 3 7 4-11 2 8 4-8" stroke={B} fill="none" strokeWidth="1.3" />
            <path d="M3 21L22 8" stroke={W} />
        </>
    ),
    borrar: (
        <>
            <path d="M7 9h12l-1 12H8zM6 6h14v2H6zM11 4h4v2h-4z" fill="#b8b8b8" />
            <path d="M11 11v8m4-8v8" stroke="#555" />
        </>
    ),
    ajustes: (
        <>
            <path d="M6 21L17 9M20 21L10 10" stroke="#c4c4c4" strokeWidth="3" />
            <path d="M4 9l4-5 5 2-5 6z" fill="#c4c4c4" />
            <path d="M15 9V5l3-2v4l4 0-2 4h-3z" fill="#c4c4c4" />
        </>
    ),
    linea: (
        <>
            <path d="M8 18L18 8" stroke={B} />
            <path d="M6 17h4v4H6zM16 6h4v4h-4z" fill={B} />
            <path d="M9 9l2 2" stroke={B} />
        </>
    ),
    paralelas: (
        <>
            <path d="M5 16L17 5M9 21L22 8" stroke={B} strokeWidth="1.4" />
            <path d="M9 10l8 6M7 20L21 6" stroke={W} />
        </>
    ),
    texto: (
        <>
            <path d="M5 5h16v13l-4 4H5z" fill="#3c4450" stroke={W} />
            <path d="M9 9h8v2M13 9v9M11 18h4" stroke="#fff" fill="none" strokeWidth="1.5" />
        </>
    ),
    derecha: <path d="M6 10h7V6l7 7-7 7v-4H6z" fill="#fff" />,
    arriba: <path d="M10 20v-7H7l5-8 5 8h-3v7z" fill="#0b0" />,
    abajo: <path d="M11 6v7H8l5 8 5-8h-3V6z" fill="#e11" />,
    rectangulo: (
        <>
            <path d="M6 7h15v12H6z" stroke={W} fill="none" />
            <Cross x={5} y={6} />
            <Cross x={21} y={20} />
        </>
    ),
    triangulo: (
        <>
            <path d="M13 6L6 20h14z" stroke={W} fill="none" />
            <Cross x={13} y={6} />
            <Cross x={6} y={20} />
            <Cross x={20} y={20} />
        </>
    ),
    soporte: (
        <>
            <path d="M7 6h14" stroke="#f00" strokeWidth="2.5" />
            <path d="M4 20h18" stroke="#0b0" strokeWidth="2.5" />
            <path d="M4 16l4-6 3 6 4-6 2 3 4-5" stroke={B} fill="none" strokeWidth="1.4" />
        </>
    ),
    patron: (
        <>
            <path d="M3 4l20 7" stroke="#f00" strokeWidth="2.5" />
            <path d="M5 22l18-8" stroke="#0b0" strokeWidth="2.5" />
            <path d="M4 6l3 13 3-10 4 9 3-8 4 5" stroke={B} fill="none" strokeWidth="1.4" />
        </>
    ),
    elipse: (
        <>
            <ellipse cx="14" cy="13" rx="7" ry="6" stroke={W} fill="none" strokeWidth="1.4" />
            <path d="M5 7h16v12" stroke="#777" fill="none" />
            <Cross x={5} y={7} />
            <Cross x={22} y={20} />
        </>
    ),
};

const COLORS = [
    '#ffffff', '#d0d0d0', '#a8a8a8', '#808080', '#606060', '#000000', '#b0c4ff',
    '#6090f0', '#40b8ff', '#0000ff', '#3030c8', '#000090', '#8000c0', '#ff80c0',
    '#d86060', '#ff0000', '#e03030', '#884400', '#ff8040', '#ff9070', '#ffc040',
    '#ffff00', '#40ffc0', '#80ff80', '#00ff00', '#50d050', '#30a030', '#008000',
];

const Wrench = () => (
    <svg width="15" height="14" viewBox="0 0 15 14">
        <path d="M2 12l5-6q-1-3 2-5v3l2 1 2-2q1 4-3 5l-5 5q-2 1-3-1z" fill="#1a1a1a" stroke={W} strokeWidth="1.1" />
    </svg>
);

const WinIcon = () => (
    <svg width="15" height="14" viewBox="0 0 15 14">
        <rect x="1" y="1" width="12" height="12" rx="2" fill="#080808" stroke={W} strokeWidth="1.2" />
        <path d="M1 1h12v4H1z" fill={W} />
    </svg>
);

const CloseIcon = () => (
    <svg width="15" height="14" viewBox="0 0 15 14">
        <circle cx="7" cy="7" r="6.5" fill={W} />
        <path d="M4.5 4.5l5 5m0-5l-5 5" stroke="#111" strokeWidth="2" />
    </svg>
);

const DocArrow = ({ color, down }) => (
    <svg width="15" height="15" viewBox="0 0 15 15">
        <path d="M2 2h8l3 3v8H2z" fill="#111" stroke="#ccc" />
        <path d={down ? 'M6 3h3v4h3l-5 5-4-5h3z' : 'M6 12h3V8h3L7 3 3 8h3z'} fill={color} />
    </svg>
);

const Gears = () => (
    <svg width="15" height="15" viewBox="0 0 15 15">
        <circle cx="5.5" cy="5.5" r="3.2" fill="none" stroke={B} strokeWidth="2" />
        <circle cx="5.5" cy="5.5" r="4.8" fill="none" stroke={B} strokeWidth="1.5" strokeDasharray="2 2" />
        <circle cx="12" cy="11.5" r="2" fill="none" stroke={B} strokeWidth="1.5" />
    </svg>
);

const CancelDoc = ({ color }) => (
    <svg width="13" height="13" viewBox="0 0 13 13">
        <path d="M1 1h8l3 3v8H1z" fill="#222" stroke="#555" />
        <path d="M3 4l6 6m0-6l-6 6" stroke={color} strokeWidth="2.5" />
    </svg>
);

const OrderIcon = ({ flip, list }) => (
    <svg width="26" height="26" viewBox="0 0 26 26">
        <path d="M5 4h11l4 4v14H5z" fill="#181818" stroke="#aaa" />
        <path d={flip ? 'M5 10l4-7 4 7h-2v4H7v-4z' : 'M5 6l4 7 4-7h-2V3H7v3z'} fill={flip ? '#0b0' : '#f22'} />
        <path d={flip ? 'M5 17l4 7 4-7h-2v-4H7v4z' : 'M5 21l4-7 4 7h-2v4H7v-4z'} fill={flip ? '#f22' : '#0b0'} />
        {list ? (
            <path d="M13 14h10M13 17h10M13 20h10M13 23h10" stroke={W} strokeWidth="1.5" />
        ) : (
            <path d="M13 14h10v9H13zM13 23l10-9" fill="#222" stroke={W} />
        )}
    </svg>
);

const Arrow = () => (
    <svg width="15" height="16" viewBox="0 0 15 16">
        <rect width="15" height="16" fill="#2c2c2c" />
        <path d="M4 6h8l-4 5z" fill="#eee" />
    </svg>
);

const Choice = ({ label, width, value, options }) => {
    const [current, setCurrent] = useState(value);
    return (
        <SelectBox $width={width}>
            <select aria-label={label} value={current} onChange={(e) => setCurrent(e.target.value)}>
                {options.map((o) => (
                    <option key={o}>{o}</option>
                ))}
            </select>
            <Arrow />
        </SelectBox>
    );
};

const StopCheck = ({ id, name }) => (
    <Check>
        <label>
            <input type="checkbox" defaultChecked />
            {name}
        </label>
        <input type="text" id={id} defaultValue="20" aria-label={`Puntos ${name}`} />
        <label htmlFor={id}>pts</label>
    </Check>
);

const HeadIcons = () => (
    <>
        <PlainButton aria-label="Propiedades"><Wrench /></PlainButton>
        <PlainButton aria-label="Ventana"><WinIcon /></PlainButton>
        <PlainButton aria-label="Cerrar"><CloseIcon /></PlainButton>
    </>
);

/* ---------- charts ---------- */

const TAG_FILL = { red: 'url(#tagRed)', green: 'url(#tagGreen)', dark: 'url(#tagDark)', yellow: '#f8f810', gold: '#f8d010' };

const AxisTag = ({ y, text, sub, kind, c, w, end }) => (
    <g>
        <rect x="4.5" y={y + 0.5} width={w || 45} height={sub ? 26 : 15} fill={TAG_FILL[kind]} stroke="#555" />
        {text && (
            <text x={end ? 49 : 6} y={y + 12} fill={c || '#111'} textAnchor={end ? 'end' : 'start'}>{text}</text>
        )}
        {sub && <text x="6" y={y + 24} fill="#111">{sub}</text>}
    </g>
);

const PriceAxis = () => (
    <Axis>
        <defs>
            <linearGradient id="tagRed" x2="0" y2="1">
                <stop stopColor="#ff9c9c" />
                <stop offset="1" stopColor="#f07070" />
            </linearGradient>
            <linearGradient id="tagGreen" x2="0" y2="1">
                <stop stopColor="#b8f8b8" />
                <stop offset="1" stopColor="#88c888" />
            </linearGradient>
            <linearGradient id="tagDark" x2="0" y2="1">
                <stop stopColor="#333" />
                <stop offset="1" stopColor="#000" />
            </linearGradient>
        </defs>
        {PRICE_MARKS.map(([y, t]) => (
            <g key={t}>
                <path d={`M0 ${y}.5h4`} stroke="#555" />
                <text x="6" y={y + 4} fill="#ddd">{t}</text>
            </g>
        ))}
        {LEVELS.map((l) => (
            <path key={l.v} d={`M0 ${YR(l.v)}h5`} stroke={l.c} />
        ))}
        <path d="M0 165.5h5" stroke="#fff" />
        {PRICE_TAGS.map((t) => (
            <AxisTag key={t.kind + t.y} {...t} />
        ))}
    </Axis>
);

const PricePlot = () => (
    <Plot>
        <g transform="translate(-4 0)">
            {SESSIONS.map(([x1, x2, top, bottom]) => (
                <rect
                    key={x1}
                    x={x1 + 0.5}
                    y={YR(top)}
                    width={x2 - x1}
                    height={YR(bottom) - YR(top)}
                    fill="rgba(115,126,160,.5)"
                    stroke="#f4f4f4"
                />
            ))}
            <path d={band(mm89, true)} fill="rgba(9,111,9,.58)" />
            <path d={band(mm89, false)} fill="rgba(111,6,6,.55)" />
            <path d={band(mm9, true)} fill="rgba(100,215,140,.6)" />
            <path d={band(mm9, false)} fill="rgba(235,170,170,.6)" />
            <path d={wicks} stroke="#fff" shapeRendering="crispEdges" />
            <path d={bodies(true)} fill="#5cd65c" stroke="#fff" shapeRendering="crispEdges" />
            <path d={bodies(false)} fill="#ee7474" stroke="#fff" shapeRendering="crispEdges" />
            <path d={slope(mm9, true)} stroke="#10e010" strokeWidth="1.3" />
            <path d={slope(mm9, false)} stroke="#e01838" strokeWidth="1.3" />
            <path d={slope(mm89, true)} stroke="#30f800" strokeWidth="2.5" strokeLinecap="round" />
            <path d={slope(mm89, false)} stroke="#f00" strokeWidth="2.5" strokeLinecap="round" />
            <polyline points={points(BOLL_SUP)} fill="none" stroke="#30d030" strokeDasharray="5 4" strokeWidth="1.2" />
            <polyline points={points(BOLL_INF)} fill="none" stroke="#d03030" strokeDasharray="5 4" strokeWidth="1.2" />
            <path d={`M1903 ${YR(403)}H2146`} stroke="#fff" />
            {LEVELS.map((l) => (
                <line
                    key={l.v}
                    x1={l.from}
                    x2="9999"
                    y1={Math.floor(Y(l.v)) + (l.w % 2) / 2}
                    y2={Math.floor(Y(l.v)) + (l.w % 2) / 2}
                    stroke={l.c}
                    strokeWidth={l.w}
                    strokeDasharray={l.dash ? '21 9' : undefined}
                />
            ))}
            <path d={`M0 ${YR(121)}H9999M1560.5 0V9999`} stroke="#b04040" />
            <text x="2123" y="52" fill="#0a9a0a" fontSize="13">r4</text>
            <text x="2118" y="309" fill="#8f8f00" fontSize="17" fontWeight="bold">PA</text>
            <text x="2123" y="561" fill="#a80000" fontSize="13" fontWeight="bold">s4</text>
            <text x="2120" y="919" fill="#a80000" fontSize="15" fontWeight="bold">S9</text>
        </g>
    </Plot>
);

const TrendPlot = () => (
    <Plot>
        <g transform="translate(-4 0)" fill="none" strokeLinejoin="round">
            <ellipse cx="469" cy={Y(17)} rx="10" ry="9" fill="rgba(110,120,150,.6)" stroke="#c22" />
            <ellipse cx="1707" cy={Y(77)} rx="16" ry="9" fill="rgba(110,120,150,.6)" stroke="#c22" />
            <ellipse cx="1984" cy={Y(1271)} rx="16" ry="4" fill="rgba(90,110,120,.7)" stroke="#2c2" />
            <path d="M1480 237.5h80" stroke="#3f3" />
            <path d="M1480 299.5h80" stroke="#e01838" />
            <path d="M1480 362q25 0 40-6t40-6" stroke="#666" />
            <path d="M1480 425q25 0 40-5t40-5" stroke="#3f3" />
            <path d="M1480 593.5h80" stroke="#e33" />
            {[[237, '#3f3'], [299, '#e01838'], [350, '#666'], [415, '#3f3'], [593, '#e33']].map(([y, c]) => (
                <circle key={y} cx="1560" cy={y + 0.5} r="3" fill="#222" stroke={c} />
            ))}
            <path d={`M469 ${Y(30)}L978 ${Y(1280)}L1704 ${Y(74)}L1927 ${Y(1535)}`} stroke="#ed1c24" strokeWidth="5.5" strokeLinecap="round" />
            <path d={`M1927 ${Y(1510)}L1949 ${Y(985)}L1983 ${Y(1267)}L2079 ${Y(483)}`} stroke="#b5e61d" strokeWidth="5" strokeLinecap="round" />
        </g>
    </Plot>
);

const INFO = [
    ['Apertura', '12.431,5'],
    ['Máximo', '12.432,4'],
    ['Mínimo', '12.423,8'],
    ['Cierre', '12.425,6'],
    ['Máximo-Mínimo (0,07%)', '+8,6'],
    ['Var. / víspera (0,03%)', '+3,6'],
    ['Var. / unidad ant. (-0,07%)', '-8,1'],
];

const Line = ({ x = 1289, y, width = 187, color, name, value }) => (
    <Tag $x={x} $y={y} $width={width} $color={color}>
        <span>{name}</span>
        <span>{value}</span>
    </Tag>
);

const PricePanel = () => (
    <Panel $first $from="#353535" $to="#0c0c0c">
        <PricePlot />
        <Line y={178} color="#f01010" name="Res H P (-0,05%)" value="12.474,5" />
        <Line y={227} color="#3f3" name="Boll sup (89,2)" value="12.459,57758" />
        <Line y={289} color="#e81840" name="MM9" value="12.441,06667" />
        <InfoBox>
            {INFO.map(([k, v]) => (
                <div key={k}>
                    <dt>{k}</dt>
                    <dd>{v}</dd>
                </div>
            ))}
        </InfoBox>
        <Line y={415} color="#30f810" name="Boll media (89,2)" value="12.406,00225" />
        <Line y={583} color="#e83030" name="Boll inf (89,2)" value="12.352,42691" />
        <TrendPlot />
        <PanelHead>
            <PanelTitle>
                Precio
                <HeadIcons />
                <PlainButton aria-label="Vender"><DocArrow color="#f22" down /></PlainButton>
                <PlainButton aria-label="Comprar"><DocArrow color="#0c0" /></PlainButton>
            </PanelTitle>
            Día:+Alto 12.425,2 +Bajo 12.360,2
        </PanelHead>
        <Credits>
            © IT-Finance.com&nbsp; <em>Datos recibidos indicativos</em>
        </Credits>
    </Panel>
);

const VolumePanel = () => (
    <Panel $from="#101010" $to="#0a0a0a">
        <Plot>
            <g transform="translate(-4 0)" shapeRendering="crispEdges">
                {VOLUME.map((v, i) => v > 0 && (
                    <rect key={i} x={X(i) - 2} y={90.5 - v / 3} width="3" height={v / 3 + 1} fill="#989898" stroke="#d0d0d0" />
                ))}
                <path d="M1560.5 0V99" stroke="#555" />
            </g>
        </Plot>
        <Line x={1413} y={70} width={62} color="#999" name="Volumen" value="0" />
        <Plot>
            <path d="M1475 80q25 0 42 5t38 5" fill="none" stroke="#888" />
            <circle cx="1556" cy="90" r="3" fill="#222" stroke="#999" />
        </Plot>
        <PanelHead>
            <PanelTitle>
                Volumen
                <HeadIcons />
            </PanelTitle>
        </PanelHead>
    </Panel>
);

const ChaikinPanel = () => (
    <Panel $from="#0a0a0a" $to="#000">
        <Plot>
            <g transform="translate(-4 0)" shapeRendering="crispEdges">
                {CHAIKIN.map((v, i) => v !== 0 && (
                    <rect
                        key={i}
                        x={X(i) - 2}
                        y={v > 0 ? 97.5 - v / 3 : 97.5}
                        width="3"
                        height={Math.abs(v) / 3}
                        fill={v > 0 ? '#50d450' : '#e86c6c'}
                        stroke={v > 0 ? '#84f884' : '#ff9090'}
                    />
                ))}
                <path d="M0 97.5H9999" stroke="#3030d0" />
                <path d="M1560.5 0V999" stroke="#555" />
            </g>
        </Plot>
        <Line x={1379} y={81} width={96} color="#3c3" name="CFD (21)" value="0,03807" />
        <Plot>
            <path d="M1475 91.5h80" stroke="#3c3" />
            <circle cx="1556" cy="91" r="3" fill="#222" stroke="#3c3" />
        </Plot>
        <PanelHead>
            <PanelTitle>
                Chaikin, flujo dinero (21)
                <HeadIcons />
            </PanelTitle>
        </PanelHead>
    </Panel>
);

const SmallAxis = ({ marks, tag }) => (
    <Axis>
        {marks.map(([y, t]) => (
            <g key={t}>
                <path d={`M0 ${y}.5h4`} stroke="#555" />
                <text x="6" y={y + 4} fill="#ddd">{t}</text>
            </g>
        ))}
        <rect x="4.5" y={tag.y + 0.5} width={tag.w} height="15" fill="url(#tagDark)" stroke="#555" />
        <text x="6" y={tag.y + 12} fill={tag.c}>{tag.text}</text>
    </Axis>
);

const TimeScale = () => (
    <TimeAxis>
        <g transform="translate(-4 0)" textAnchor="middle" fill="#ddd">
            {TIMES.map(([x, t]) => (
                <g key={x}>
                    <path d={`M${x}.5 0v4`} stroke="#666" />
                    <text x={x} y="16" fontWeight={t.includes(':') ? 'normal' : 'bold'}>{t}</text>
                </g>
            ))}
            <rect x="1503" y="4" width="114" height="15" fill="#f8f810" stroke="#777" />
            <text x="1560" y="16" fill="#111">jue 19-sep-2019 22:30</text>
        </g>
    </TimeAxis>
);

const Zoom = ({ sign }) => (
    <svg width="20" height="18" viewBox="0 0 20 18">
        <circle cx="8" cy="7" r="5" fill="#1a2830" stroke={W} strokeWidth="1.5" />
        <path d="M12 11l5 5" stroke={W} strokeWidth="2.5" />
        {sign === '+' && <path d="M5 7h6M8 4v6" stroke={B} strokeWidth="1.5" />}
        {sign === '-' && <path d="M5 7h6" stroke={B} strokeWidth="1.5" />}
        {sign === '^' && <path d="M7 4v6M15 1v9M13 3l2-2 2 2M13 8l2 2 2-2" stroke={B} fill="none" strokeWidth="1.3" />}
    </svg>
);

const App = () => {
    const [tool, setTool] = useState('cursor');
    const [color, setColor] = useState('#00ff00');

    return (
        <Screen>
            <GlobalStyle />
            <Window>
                <TitleBar>
                    <svg width="17" height="20" viewBox="0 0 17 20">
                        <path d="M4 5v12M12 1v18" stroke="#fff" />
                        <path d="M1 8h6v7H1z" fill="#fff" />
                        <path d="M9 4h5v11H9z" fill="#777" stroke="#fff" />
                    </svg>
                    <svg width="10" height="10" viewBox="0 0 10 10">
                        <path d="M3 3h7l-4 5z" fill="#fff" />
                    </svg>
                    <Market>DAX</Market>
                    <svg width="12" height="13" viewBox="0 0 12 13">
                        <rect width="12" height="13" fill="#2e2e38" />
                        <path d="M5 2h2v2H5zM4 5h3v5h1v1H4v-1h1V6H4z" fill="#fff" />
                    </svg>
                    <Quote>12.379,5 (-0,09%)</Quote>
                    7:54:15 Alemania 30 Cash (1€)
                    <WindowButtons>
                        <PlainButton aria-label="Teclado">
                            <svg width="20" height="14" viewBox="0 0 20 14">
                                <rect width="20" height="14" rx="2" fill="#fff" />
                                <path d="M3 4h14M3 7h14" stroke="#666" strokeWidth="1.5" strokeDasharray="2 1" />
                                <path d="M6 11h8" stroke="#666" strokeWidth="1.5" />
                            </svg>
                        </PlainButton>
                        <PlainButton aria-label="Minimizar">
                            <svg width="9" height="12"><path d="M0 10h9" stroke="#fff" strokeWidth="2" /></svg>
                        </PlainButton>
                        <PlainButton aria-label="Restaurar">
                            <svg width="10" height="12"><path d="M3 3V1h6v6H7M1 4h6v6H1z" stroke="#fff" fill="none" strokeWidth="1.5" /></svg>
                        </PlainButton>
                        <PlainButton aria-label="Cerrar">
                            <svg width="10" height="12"><path d="M1 2l8 8m0-8l-8 8" stroke="#fff" strokeWidth="2" /></svg>
                        </PlainButton>
                    </WindowButtons>
                </TitleBar>

                <StatusRow>
                    <Status>Órdenes:  0 <CancelDoc color="#667" />  / <b>0</b><Gears /></Status>
                    <Status>Posición:  0 <CancelDoc color="#922" />  / <b>0</b><Gears /></Status>
                    <Status>Gan latente: <b>0,00 €</b></Status>
                    <Status $gap={5}>Gan día: <b>0,00 €</b></Status>
                </StatusRow>

                <Toolbar>
                    <Tools>
                        {Object.keys(TOOLS).map((name) => (
                            <Tool key={name} aria-label={name} $on={tool === name || name === 'soporte'} onClick={() => setTool(name)}>
                                <svg width="26" height="26" viewBox="0 0 26 26">{TOOLS[name]}</svg>
                            </Tool>
                        ))}
                        <Palette>
                            {COLORS.map((c) => (
                                <Swatch key={c} $color={c} $on={c === color} aria-label={c} onClick={() => setColor(c)} />
                            ))}
                        </Palette>
                    </Tools>
                    <Center><Choice label="Histórico" width={101} value="1 mes" options={['1 día', '1 mes', '1 año']} /></Center>
                    <Center><Choice label="Periodo" width={93} value="30 minutos" options={['5 minutos', '30 minutos', '1 hora']} /></Center>
                    <Center $right={6}>
                        <IndicatorButton aria-label="Indicadores">
                            <svg width="48" height="25" viewBox="0 0 48 25">
                                <path d="M1 21q7-22 14-8t17-9M1 10q6 2 10 8t10-5 10-2" stroke="#b03030" fill="none" strokeWidth="1.5" />
                                <path d="M1 20q10-20 16-8t15-2" stroke="#2a2" fill="none" strokeWidth="1.5" />
                                <path d="M6 2v9M2 6h9" stroke="#fff" strokeWidth="3" />
                                <path d="M24 2v6M21 6l3 4 3-4" stroke="#f22" fill="#f22" />
                                <path d="M13 18v-5M10 14l3-4 3 4" stroke="#0c0" fill="#0c0" />
                                <path d="M2 18h4v4H2zM14 19h4v3h-4zM27 16h4v6h-4z" fill="#0c0" />
                                <path d="M8 19h4v3H8zM20 20h4v2h-4z" fill="#f22" />
                                <path d="M1 23h31" stroke="#33f" />
                                <path d="M34 0v25" stroke="#555" />
                                <path d="M38 11h7l-4 4z" fill="#eee" />
                            </svg>
                        </IndicatorButton>
                    </Center>
                    <OrderPanel>
                        <svg width="9" height="47" viewBox="0 0 9 47">
                            <path d="M0 0h9L1 6v35l8 6H0z" fill="#161616" />
                            <path d="M9 0L1 6v35l8 6" fill="none" stroke="#666" />
                            <path d="M3 20l5 4-5 4z" fill="#eee" />
                        </svg>
                        <WrenchButton aria-label="Ajustes"><Wrench /></WrenchButton>
                        <OrderGroup>
                            <label htmlFor="cant">Cant</label>
                            <QtyInput id="cant" defaultValue="0.5" />
                        </OrderGroup>
                        <Divider />
                        <OrderGroup>
                            Límite
                            <OrderRow>
                                <OrderButton aria-label="Límite"><OrderIcon list /></OrderButton>
                                <OrderButton aria-label="Límite en gráfico"><OrderIcon /></OrderButton>
                            </OrderRow>
                        </OrderGroup>
                        <Divider />
                        <OrderGroup>
                            Stop
                            <OrderRow>
                                <OrderButton aria-label="Stop"><OrderIcon flip list /></OrderButton>
                                <OrderButton aria-label="Stop en gráfico"><OrderIcon flip /></OrderButton>
                            </OrderRow>
                        </OrderGroup>
                        <Divider />
                        <OrderGroup>
                            Vender
                            <PriceButton>12.3<b>77,</b><sup>5</sup></PriceButton>
                        </OrderGroup>
                        <OrderGroup>
                            Comprar
                            <PriceButton $buy>12.3<b>81,</b><sup>5</sup></PriceButton>
                        </OrderGroup>
                        <Divider />
                        <Checks>
                            <StopCheck id="ptsS" name="S" />
                            <StopCheck id="ptsL" name="L" />
                        </Checks>
                    </OrderPanel>
                </Toolbar>

                <Charts>
                    <PricePanel />
                    <PriceAxis />
                    <VolumePanel />
                    <SmallAxis
                        marks={[[6, '15.000'], [31, '10.000'], [61, '5.000']]}
                        tag={{ y: 75, w: 22, text: '173', c: '#aaa' }}
                    />
                    <ChaikinPanel />
                    <SmallAxis
                        marks={[[9, '0,6'], [39, '0,4'], [68, '0,2'], [97, '0'], [128, '-0,2'], [158, '-0,4'], [187, '-0,6']]}
                        tag={{ y: 101, w: 41, text: '-0,0743', c: '#f05050' }}
                    />
                </Charts>

                <TimeScale />

                <BottomBar>
                    <ShareButton>
                        <svg width="14" height="14" viewBox="0 0 14 14">
                            <path d="M11 3L3 7l8 4" stroke="#fff" fill="none" strokeWidth="1.5" />
                            <circle cx="11" cy="3" r="2.5" fill="#fff" />
                            <circle cx="3" cy="7" r="2.5" fill="#fff" />
                            <circle cx="11" cy="11" r="2.5" fill="#fff" />
                        </svg>
                        Compartir
                    </ShareButton>
                    <PlainButton aria-label="Enlazar">
                        <svg width="22" height="20" viewBox="0 0 22 20">
                            <path d="M1 8V4q0-3 2-3t2 3v4M1 12v4q0 3 2 3t2-3v-4" stroke={W} fill="none" strokeWidth="1.8" />
                            <path d="M12 4v12" stroke="#f66" />
                            <path d="M10 6h4v8h-4z" fill="#f77" />
                            <path d="M18 0v16" stroke="#3d3" />
                            <path d="M16 3h5v10h-5z" fill="#6e6" />
                            <path d="M13 16h6l-3 4z" fill={W} />
                        </svg>
                    </PlainButton>
                    <PlainButton aria-label="Lista">
                        <svg width="14" height="16" viewBox="0 0 14 16">
                            <path d="M0 0h14v16H0z" fill="#667080" />
                            <path d="M2 3h6M3 6h8M3 9h8M6 12h6" stroke="#111" strokeWidth="1.5" />
                            <path d="M7 1h6l-3 5z" fill="#f44" />
                            <path d="M1 15h6l-3-5z" fill="#0b0" />
                        </svg>
                    </PlainButton>
                    <PlainButton aria-label="Libro de órdenes">
                        <svg width="22" height="17" viewBox="0 0 22 17">
                            <path d="M6 0h9v3H6zM8 4h7v2H8zM6 7h9v3H6zM8 11h7v2H8zM6 14h9v3H6z" fill="#0c0" />
                            <path d="M15 0h5v3h-5zM15 4h7v2h-7zM15 7h5v3h-5zM15 11h7v2h-7zM15 14h5v3h-5z" fill="#f55" />
                        </svg>
                    </PlainButton>
                    <Scroller>
                        <ScrollArrow aria-label="Izquierda">
                            <svg width="5" height="8"><path d="M5 0v8L0 4z" fill="#eee" /></svg>
                        </ScrollArrow>
                        <ScrollTrack>
                            <Thumb>
                                <svg width="7" height="7"><path d="M1 0v7M3 0v7M5 0v7" stroke="#777" /></svg>
                            </Thumb>
                        </ScrollTrack>
                        <ScrollArrow aria-label="Derecha">
                            <svg width="5" height="8"><path d="M0 0v8l5-4z" fill="#eee" /></svg>
                        </ScrollArrow>
                    </Scroller>
                    <PlainButton aria-label="Escala">
                        <svg width="18" height="18" viewBox="0 0 18 18">
                            <path d="M1 9h4v8H1z" fill="#f66" stroke={W} />
                            <path d="M6 6h4v9H6z" fill="#6e6" stroke={W} />
                            <path d="M12 2h4v9h-4z" fill="#6e6" stroke={W} />
                            <path d="M3 17l12-3" stroke={W} />
                        </svg>
                    </PlainButton>
                    <PlainButton aria-label="Ajustar"><Zoom sign="^" /></PlainButton>
                    <PlainButton aria-label="Alejar"><Zoom sign="-" /></PlainButton>
                    <PlainButton aria-label="Acercar"><Zoom sign="+" /></PlainButton>
                </BottomBar>
            </Window>

            <TaskBar>
                <TaskButton $width={48} aria-label="Inicio">
                    <svg width="16" height="16" viewBox="0 0 16 16">
                        <path d="M0 2l7-1v6.5H0zM8 1l8-1v7.5H8zM0 8.5h7V15l-7-1zM8 8.5h8V16l-8-1z" fill="#fff" />
                    </svg>
                </TaskButton>
                <Search>
                    <svg width="20" height="20" viewBox="0 0 20 20">
                        <circle cx="10" cy="10" r="8.5" fill="none" stroke="#111" strokeWidth="2.5" />
                    </svg>
                    <input type="text" placeholder="Escribe aquí para buscar" />
                    <svg width="12" height="18" viewBox="0 0 12 18">
                        <rect x="4" y="1" width="4" height="10" rx="2" fill="none" stroke="#333" />
                        <path d="M1 8v3q0 3 5 3t5-3V8M6 14v3M3 17h6" fill="none" stroke="#333" />
                    </svg>
                </Search>
                <TaskButton aria-label="Vista de tareas">
                    <svg width="18" height="16" viewBox="0 0 18 16">
                        <path d="M1 4h11v8H1zM1 0v2h11V0M1 16v-2h11v2M16 0v16" fill="none" stroke="#ddd" strokeWidth="1.3" />
                        <path d="M15 4h2v4h-2z" fill="#fff" />
                    </svg>
                </TaskButton>
                <TaskButton $width={51} aria-label="Edge">
                    <svg width="22" height="22" viewBox="0 0 22 22">
                        <path d="M1 10Q3 1 12 1q8 0 9 9v3H8q0 5 6 5 4 0 6-2v4q-3 2-7 2-9 0-9-9 0-5 5-7-6 0-8 6zM8 10h7q0-4-3.5-4T8 10z" fill="#0078d7" fillRule="evenodd" />
                    </svg>
                </TaskButton>
                <TaskButton $width={47} aria-label="Tienda">
                    <svg width="24" height="24" viewBox="0 0 24 24">
                        <path d="M8 7V4q0-3 4-3t4 3v3" fill="none" stroke="#fff" strokeWidth="1.3" />
                        <rect x="1" y="6" width="22" height="17" rx="1" fill="#fff" />
                        <path d="M7 9h5v5H7z" fill="#f25022" />
                        <path d="M13 9h5v5h-5z" fill="#7fba00" />
                        <path d="M7 15h5v5H7z" fill="#00a4ef" />
                        <path d="M13 15h5v5h-5z" fill="#ffb900" />
                    </svg>
                </TaskButton>
                <TaskButton aria-label="Correo">
                    <svg width="26" height="20" viewBox="0 0 26 20">
                        <path d="M1 7l12-6 12 6v12H1z" fill="#fff" />
                        <path d="M1 7h24l-11 6 3-5z" fill="#111" />
                    </svg>
                </TaskButton>
                <TaskButton $width={40} $m={5} $running aria-label="Explorador">
                    <svg width="24" height="20" viewBox="0 0 24 20">
                        <path d="M1 1h9l2 2h11v16H1z" fill="#ffe08a" />
                        <path d="M5 19v-6q0-2 2-2h10q2 0 2 2v6h-4v-4H9v4z" fill="#3ab0e0" />
                    </svg>
                </TaskButton>
                <TaskButton $width={40} $m={5} $running aria-label="IG">
                    <svg width="22" height="22" viewBox="0 0 22 22">
                        <circle cx="14" cy="7" r="6" fill="#1f7ff0" />
                        <circle cx="7" cy="15" r="6" fill="#cc2936" />
                    </svg>
                </TaskButton>
                <TaskButton $width={46} $running $active aria-label="ProRealTime">
                    <svg width="22" height="24" viewBox="0 0 22 24">
                        <path d="M5 6v17" stroke="#d33" />
                        <path d="M1 10h8v11H1z" fill="#e55" />
                        <path d="M16 0v24" stroke="#2a2" />
                        <path d="M12 4h8v15h-8z" fill="#4d5" />
                    </svg>
                </TaskButton>
                <TaskButton $width={40} $m={7} $running aria-label="Paint">
                    <svg width="24" height="22" viewBox="0 0 24 22">
                        <ellipse cx="10" cy="13" rx="9" ry="8" fill="#cfe3ee" />
                        <circle cx="6" cy="10" r="2" fill="#e44" />
                        <circle cx="11" cy="8" r="2" fill="#fb3" />
                        <circle cx="5" cy="15" r="2" fill="#3a3" />
                        <circle cx="9" cy="18" r="2" fill="#38e" />
                        <path d="M21 1L13 20" stroke="#e8963c" strokeWidth="3" />
                        <path d="M18 1l5-1-1 6-4 0z" fill="#b98252" />
                    </svg>
                </TaskButton>
                <Tray>
                    <TrayItem $width={36}>
                        <svg width="16" height="16" viewBox="0 0 16 16" fill="none" stroke="#eee">
                            <circle cx="6" cy="7" r="2.5" />
                            <path d="M1 15q0-5 5-5t5 5" />
                            <circle cx="11" cy="3.5" r="2" />
                            <path d="M10 7q4-1 5 3" />
                        </svg>
                    </TrayItem>
                    <TrayItem $width={32}>
                        <svg width="12" height="8" viewBox="0 0 12 8"><path d="M1 7l5-5 5 5" fill="none" stroke="#eee" strokeWidth="1.5" /></svg>
                    </TrayItem>
                    <TrayItem $width={24}>
                        <svg width="14" height="14" viewBox="0 0 14 14" fill="none" stroke="#eee">
                            <path d="M1 13Q1 3 13 1M5 13q0-6 8-8M9 13q0-3 4-4" />
                            <circle cx="12" cy="12" r="1" />
                        </svg>
                    </TrayItem>
                    <TrayItem $width={22}>
                        <svg width="16" height="14" viewBox="0 0 16 14" fill="none" stroke="#eee">
                            <path d="M1 5h3l4-4v12L4 9H1zM10 5q2 2 0 4M12 3q4 4 0 8" />
                        </svg>
                    </TrayItem>
                    <TrayItem $width={38}>ESP</TrayItem>
                    <TrayItem $width={70}>7:54<br />24/09/2019</TrayItem>
                    <TrayItem $width={42}>
                        <svg width="22" height="20" viewBox="0 0 22 20">
                            <path d="M1 1h16v12H8l-3 3v-3H1z" fill="#fff" />
                            <path d="M4 4h10M4 7h10M4 10h6" stroke="#222" />
                            <circle cx="16" cy="13" r="6" fill="#222" stroke="#eee" />
                            <text x="14" y="17" fill="#fff" fontSize="9">3</text>
                        </svg>
                    </TrayItem>
                </Tray>
            </TaskBar>
        </Screen>
    );
};

export default App;
